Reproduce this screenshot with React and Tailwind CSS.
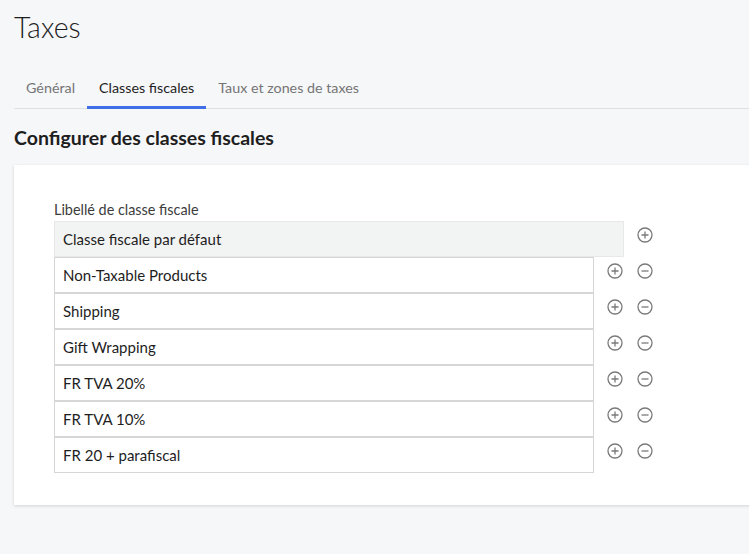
import { useState } from "react";

const font = { fontFamily: "Lato, 'Noto Sans', sans-serif" };

function PlusIcon() {
  return (
    <svg width="16" height="16" viewBox="0 0 16 16" fill="none" stroke="#7a7a7a" strokeWidth="1.3">
      <circle cx="8" cy="8" r="7" />
      <path d="M8 4.5v7M4.5 8h7" />
    </svg>
  );
}

function MinusIcon() {
  return (
    <svg width="16" height="16" viewBox="0 0 16 16" fill="none" stroke="#7a7a7a" strokeWidth="1.3">
      <circle cx="8" cy="8" r="7" />
      <path d="M4.5 8h7" />
    </svg>
  );
}

const classes = [
  "Non-Taxable Products",
  "Shipping",
  "Gift Wrapping",
  "FR TVA 20%",
  "FR TVA 10%",
  "FR 20 + parafiscal",
];

export default function App() {
  const [tab, setTab] = useState(1);
  const tabs = ["Général", "Classes fiscales", "Taux et zones de taxes"];

  return (
    <div className="min-h-[554px] bg-[#f6f7f9] pl-[14px] overflow-hidden" style={font}>
      <h1 className="pt-[9px] text-[28.5px] font-light leading-[36px] text-[#1e1e1e]">Taxes</h1>

      <div className="mt-[25px] flex border-b border-[#e0e0e0]">
        {tabs.map((t, i) => (
          <button
            key={t}
            onClick={() => setTab(i)}
            className={
              i === tab
                ? "px-3 pt-[8px] pb-[8px] leading-[20px] text-[14.3px] text-[#1e1e1e] border-b-[3px] border-[#3f6fe6] -mb-px"
                : "px-3 pt-[8px] pb-[8px] leading-[20px] text-[14.3px] text-[#757575] border-b-[3px] border-transparent -mb-px"
            }
          >
            {t}
          </button>
        ))}
      </div>

      <h2 className="mt-[15px] text-[19.5px] font-bold leading-[28px] text-[#1e1e1e]">
        Configurer des classes fiscales
      </h2>

      <div className="mt-[13px] bg-white shadow-[0_1px_3px_rgba(0,0,0,0.15)] pl-[40px] pt-[36px] pb-[32px] w-[760px]">
        <label className="block mb-[2px] text-[14.4px] leading-[18px] text-[#3c3c3c]">Libellé de classe fiscale</label>
        <div className="flex w-[599px]">
          <div className="flex-1 h-[36px] bg-[#f2f3f3] border border-[#e8e8e8] flex items-center pl-[8px] text-[15px] text-[#1e1e1e]">
            Classe fiscale par défaut
          </div>
          <div className="flex pt-[6px] ml-[13px] w-[16px]">
            <PlusIcon />
          </div>
        </div>
        {classes.map((c) => (
          <div key={c} className="flex w-[599px]">
            <div className="flex-1 h-[36px] bg-white border border-[#d6d6d6] flex items-center pl-[8px] text-[15px] text-[#1e1e1e]">
              {c}
            </div>
            <div className="flex gap-[14px] pt-[6px] ml-[13px]">
              <PlusIcon />
              <MinusIcon />
            </div>
          </div>
        ))}
      </div>
    </div>
  );
}
